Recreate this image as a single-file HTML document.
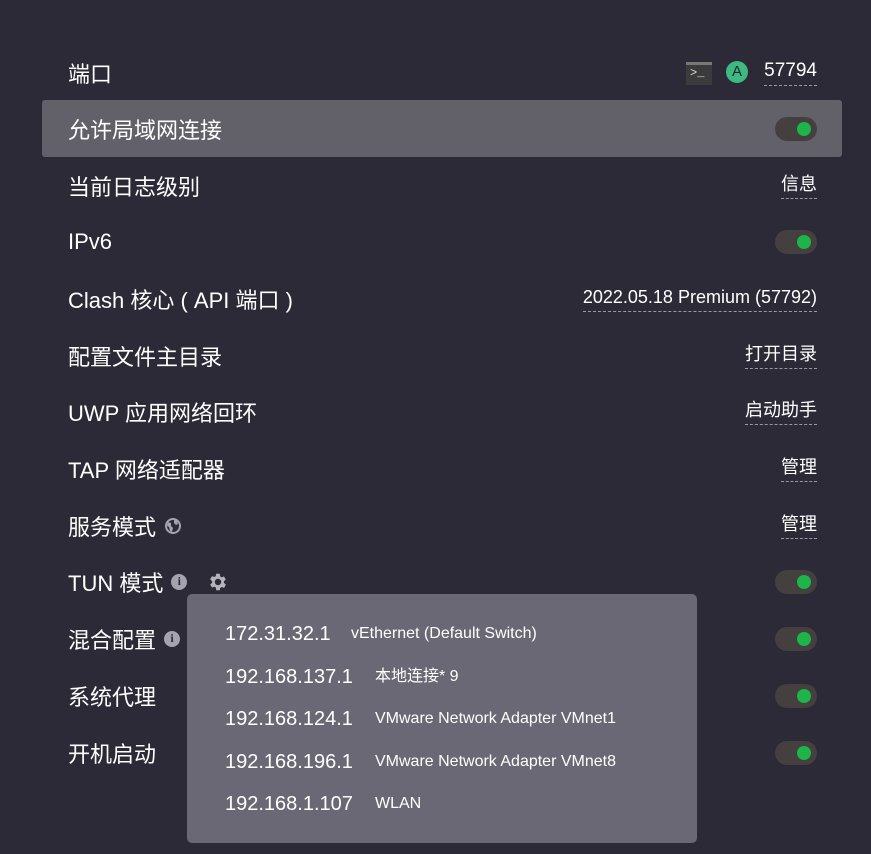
<!DOCTYPE html>
<html><head><meta charset="utf-8"><style>
body{margin:0;width:871px;height:854px;background:#2c2a37;font-family:"Liberation Sans","Noto Sans CJK SC",sans-serif;color:#fff;position:relative;overflow:hidden}
.row{position:absolute;left:42px;width:800px;height:57px}
.row.hl{background:#626169;border-radius:3px}
.lab{position:absolute;left:26px;top:50%;transform:translateY(-50%);font-size:22px;display:flex;align-items:center;gap:8px;white-space:nowrap}
.val{position:absolute;right:25px;top:50%;transform:translateY(-50%);font-size:18px;border-bottom:1px dashed #9a98a6;padding-bottom:3px;line-height:22px;white-space:nowrap}
.tg{position:absolute;right:25px;top:50%;margin-top:-12px;width:42px;height:24px;border-radius:12px;background:#44403f}
.tg::after{content:"";position:absolute;right:6px;top:5px;width:14px;height:14px;border-radius:50%;background:#1db449}
.info{width:16px;height:16px;border-radius:50%;background:#a5a3ad;color:#2c2a37;font-size:12px;font-weight:bold;display:inline-flex;align-items:center;justify-content:center;font-family:"Liberation Serif",serif}
.pop{position:absolute;left:187px;top:594px;width:510px;height:249px;background:#6a6874;border-radius:5px}
.ip{position:absolute;left:38px;font-size:20px;line-height:24px}
.nm{position:absolute;left:188px;font-size:16px;line-height:24px}
</style></head><body>
<div class="row" style="top:44px"><div class="lab">端口</div>
<div style="position:absolute;right:130px;top:18px;width:26px;height:20px;background:#3b3b3b;border-top:3px solid #777"><span style="position:absolute;left:4px;top:1px;font-size:12px;color:#ddd;font-family:'Liberation Mono',monospace">&gt;_</span></div>
<div style="position:absolute;right:94px;top:17px;width:22px;height:22px;border-radius:50%;background:#3dba83;color:#222;font-size:15px;text-align:center;line-height:22px">A</div>
<div class="val" style="font-size:19px">57794</div></div>
<div class="row hl" style="top:100px"><div class="lab">允许局域网连接</div><div class="tg"></div></div>
<div class="row" style="top:157px"><div class="lab">当前日志级别</div><div class="val">信息</div></div>
<div class="row" style="top:213px"><div class="lab">IPv6</div><div class="tg"></div></div>
<div class="row" style="top:270px"><div class="lab">Clash 核心 ( API 端口 )</div><div class="val">2022.05.18 Premium (57792)</div></div>
<div class="row" style="top:327px"><div class="lab">配置文件主目录</div><div class="val">打开目录</div></div>
<div class="row" style="top:383px"><div class="lab">UWP 应用网络回环</div><div class="val">启动助手</div></div>
<div class="row" style="top:440px"><div class="lab">TAP 网络适配器</div><div class="val">管理</div></div>
<div class="row" style="top:497px"><div class="lab">服务模式 <svg width="18" height="18" viewBox="0 0 18 18"><circle cx="9" cy="9" r="7" fill="none" stroke="#a5a3ad" stroke-width="2"/><path d="M4 5l3 1 0 3 2 2-1 4-2-1-1-4-2-1zM10 3l3 1 1 3-2 1-2-2z" fill="#a5a3ad"/></svg></div><div class="val">管理</div></div>
<div class="row" style="top:553px"><div class="lab">TUN 模式 <span class="info">i</span><svg style="margin-left:12px" width="22" height="22" viewBox="0 0 24 24"><path fill="#b5b3bc" d="M19.4 13a7.5 7.5 0 000-2l2.1-1.6-2-3.5-2.5 1a7 7 0 00-1.7-1L15 3h-4l-.4 2.6a7 7 0 00-1.7 1l-2.5-1-2 3.5L6.6 11a7.5 7.5 0 000 2l-2.1 1.6 2 3.5 2.5-1a7 7 0 001.7 1L11 21h4l.4-2.6a7 7 0 001.7-1l2.5 1 2-3.5zM13 15.5a3.5 3.5 0 110-7 3.5 3.5 0 010 7z" transform="translate(-1 0)"/></svg></div><div class="tg"></div></div>
<div class="row" style="top:610px"><div class="lab">混合配置 <span class="info">i</span></div><div class="tg"></div></div>
<div class="row" style="top:667px"><div class="lab">系统代理</div><div class="tg"></div></div>
<div class="row" style="top:724px"><div class="lab">开机启动</div><div class="tg"></div></div>
<div class="pop">
<div class="ip" style="top:28px">172.31.32.1</div><div class="nm" style="left:164px;top:28px">vEthernet (Default Switch)</div>
<div class="ip" style="top:71px">192.168.137.1</div><div class="nm" style="top:71px">本地连接* 9</div>
<div class="ip" style="top:113px">192.168.124.1</div><div class="nm" style="top:113px">VMware Network Adapter VMnet1</div>
<div class="ip" style="top:156px">192.168.196.1</div><div class="nm" style="top:156px">VMware Network Adapter VMnet8</div>
<div class="ip" style="top:198px">192.168.1.107</div><div class="nm" style="top:198px">WLAN</div>
</div>
</body></html>
